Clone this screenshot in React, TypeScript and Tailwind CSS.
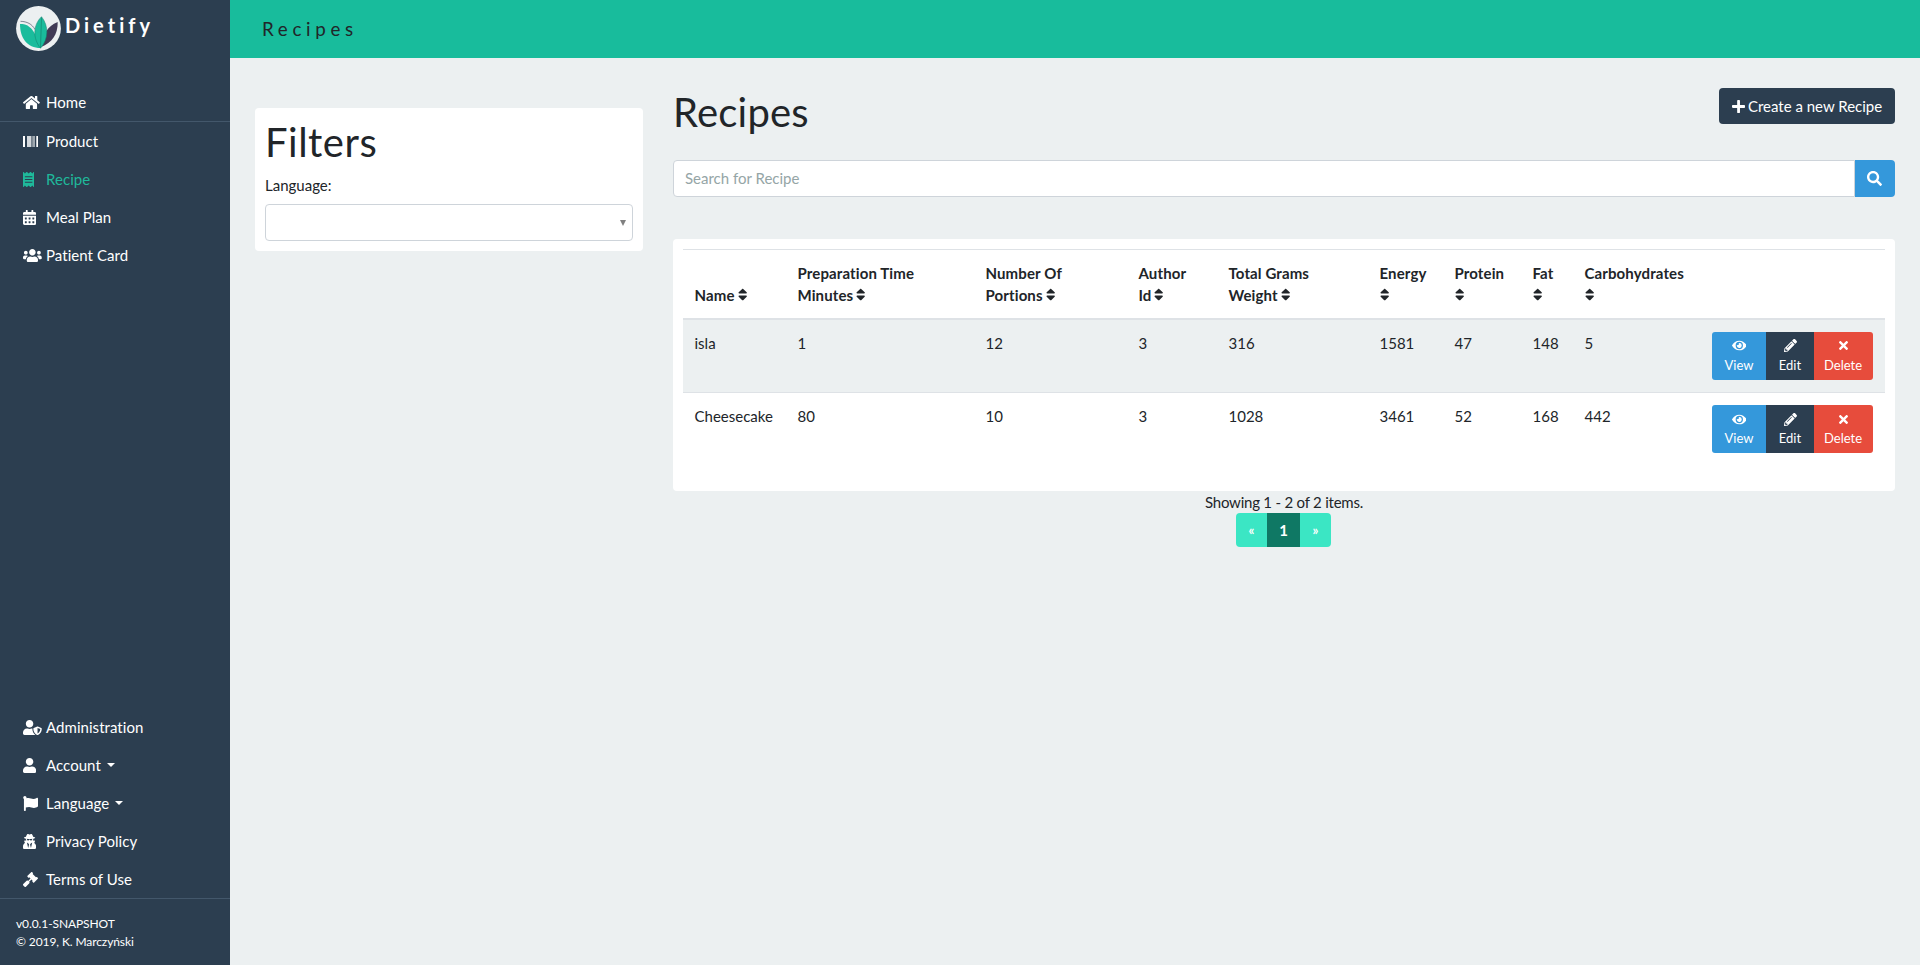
import React from "react";
import {
  FaHome, FaReceipt, FaCalendarAlt, FaUsers, FaUserShield, FaUser, FaFlag,
  FaUserSecret, FaGavel, FaPlus, FaSearch, FaSort, FaEye, FaPencilAlt, FaTimes,
} from "react-icons/fa";

type IconComponent = React.ComponentType<{ className?: string }>;
type NavEntry = { icon: IconComponent; size: string; label: string; active?: boolean; caret?: boolean };

function Barcode({ className }: { className?: string }) {
  return (
    <svg viewBox="0 0 15 15" className={className} fill="currentColor">
      <rect x="0" y="2" width="2" height="11" />
      <rect x="4" y="2" width="4" height="11" opacity="0.8" />
      <rect x="8" y="2" width="1.500" height="11" opacity="0.35" />
      <rect x="9.500" y="2" width="2.500" height="11" opacity="0.55" />
      <rect x="13.300" y="2" width="1.700" height="11" />
    </svg>
  );
}

const mainNav: NavEntry[] = [
  { icon: Barcode, size: "w-[15px]", label: "Product" },
  { icon: FaReceipt, size: "w-[11.25px]", label: "Recipe", active: true },
  { icon: FaCalendarAlt, size: "w-[13.125px]", label: "Meal Plan" },
  { icon: FaUsers, size: "w-[18.75px]", label: "Patient Card" },
];

const bottomNav: NavEntry[] = [
  { icon: FaUserShield, size: "w-[18.75px]", label: "Administration" },
  { icon: FaUser, size: "w-[13.125px]", label: "Account", caret: true },
  { icon: FaFlag, size: "w-[15px]", label: "Language", caret: true },
  { icon: FaUserSecret, size: "w-[13.125px]", label: "Privacy Policy" },
  { icon: FaGavel, size: "w-[15px]", label: "Terms of Use" },
];

const columns: { lines: string[]; width: string }[] = [
  { lines: ["Name"], width: "w-[103px]" },
  { lines: ["Preparation Time", "Minutes"], width: "w-[188px]" },
  { lines: ["Number Of", "Portions"], width: "w-[153px]" },
  { lines: ["Author", "Id"], width: "w-[90px]" },
  { lines: ["Total Grams", "Weight"], width: "w-[151px]" },
  { lines: ["Energy", ""], width: "w-[75px]" },
  { lines: ["Protein", ""], width: "w-[78px]" },
  { lines: ["Fat", ""], width: "w-[52px]" },
  { lines: ["Carbohydrates", ""], width: "w-[127px]" },
];

const rows: string[][] = [
  ["isla", "1", "12", "3", "316", "1581", "47", "148", "5"],
  ["Cheesecake", "80", "10", "3", "1028", "3461", "52", "168", "442"],
];

function Logo() {
  return (
    <svg viewBox="0 0 45 45" className="h-[45px] w-[45px]">
      <circle cx="22.500" cy="22.500" r="22.400" fill="#ecf0f1" />
      <path d="M25 41 C27 29 31 20 41.700 16 C42 28 36 37 25 41Z" fill="#413b56" />
      <path d="M19 23.500 C16 18 11 15.500 4.500 15.300" fill="none" stroke="#55566a" strokeWidth="0.7" />
      <path d="M4 18 C11 17.500 18.500 21 24.500 42 C11 42 4 32 4 18Z" fill="#1abc9c" />
      <path d="M25.500 10.700 C17 19 16.500 32 24.500 42.300 C32.500 33 33 20 25.500 10.700Z" fill="#1abc9c" stroke="#137e6d" strokeWidth="0.5" />
      <path d="M25.500 11.500 L24.500 42" stroke="#13846f" strokeWidth="0.7" />
    </svg>
  );
}

function NavItem({ icon: Icon, size, label, active, caret }: NavEntry) {
  return (
    <li className={`flex h-[38px] items-center pl-[23px] ${active ? "text-[#1fb99b]" : "text-white"}`}>
      <span className="flex w-[23px] shrink-0">
        <Icon className={`h-[15px] ${size}`} />
      </span>
      <span className="tracking-[0.05px]">{label}</span>
      {caret && (
        <span className="ml-[6px] border-x-[4.5px] border-t-[4.5px] border-x-transparent border-t-white" />
      )}
    </li>
  );
}

function RowActions() {
  const base = "flex h-12 flex-col items-center pt-1 text-[13px] leading-[19.5px] text-white";
  return (
    <div className="flex w-[161px] overflow-hidden rounded-[3px]">
      <button className={`${base} w-[54px] bg-[#3498db]`}>
        <span className="flex h-5 items-center"><FaEye className="h-[13px] w-[14.6px]" /></span>View
      </button>
      <button className={`${base} w-12 bg-[#2c3e50]`}>
        <span className="flex h-5 items-center"><FaPencilAlt className="h-[13px] w-[13px]" /></span>Edit
      </button>
      <button className={`${base} w-[59px] bg-[#e74c3c] pr-px`}>
        <span className="flex h-5 items-center"><FaTimes className="h-[13px] w-[9px]" /></span>Delete
      </button>
    </div>
  );
}

function Sidebar() {
  return (
    <aside className="flex w-[230px] shrink-0 flex-col bg-[#2c3e50]">
      <div className="flex h-[83px] pl-4 pt-[6px]">
        <Logo />
        <span className="ml-[4px] mt-[4px] text-[20px] font-bold leading-[31px] tracking-[4px] text-white">Dietify</span>
      </div>
      <ul className="border-b border-[#43576b]">
        <NavItem icon={FaHome} size="w-[16.875px]" label="Home" />
      </ul>
      <ul>
        {mainNav.map((n) => <NavItem key={n.label} {...n} />)}
      </ul>
      <ul className="mt-auto border-b border-[#43576b]">
        {bottomNav.map((n) => <NavItem key={n.label} {...n} />)}
      </ul>
      <div className="h-[66px] pl-4 pt-4 text-xs leading-[18px] tracking-[-0.1px] text-white">
        <p>v0.0.1-SNAPSHOT</p>
        <p>© 2019, K. Marczyński</p>
      </div>
    </aside>
  );
}

export default function App() {
  return (
    <div className="flex h-[965px] w-[1920px] overflow-hidden bg-[#ecf0f1] font-['Lato','Noto_Sans',sans-serif] text-[15px] leading-[22px] text-[#212529] [font-variant-ligatures:none]">
      <Sidebar />
      <div className="flex grow flex-col">
        <header className="flex h-[58px] items-center bg-[#18bc9c] pl-8 text-[18.75px] tracking-[4.7px]">Recipes</header>
        <main className="flex pl-[25px] pr-[25px]">
          <section className="mt-[50px] h-[143px] w-[388px] rounded bg-white px-[10px] pt-[10px]">
            <h2 className="text-[40px] leading-[48px] tracking-[0.5px]">Filters</h2>
            <label className="mt-2 block">Language:</label>
            <div className="mt-2 flex h-[37px] items-center justify-end rounded border border-[#ced4da] bg-white pr-[6px]">
              <svg viewBox="0 0 6 6" className="h-[6px] w-[6px]"><path d="M0 0H6L3 6Z" fill="#808080" /></svg>
            </div>
          </section>
          <section className="ml-[30px] w-[1222px] pt-[30px]">
            <div className="flex h-[72px] items-start justify-between">
              <h1 className="text-[40px] leading-[48px] tracking-[0.2px]">Recipes</h1>
              <button className="flex h-9 w-44 items-center justify-center gap-[3px] whitespace-nowrap rounded bg-[#2c3e50] text-white">
                <FaPlus className="h-[15px] w-[13.125px]" />
                <span>Create a new Recipe</span>
              </button>
            </div>
            <div className="flex h-[37px]">
              <div className="flex grow items-center rounded-l border border-[#ced4da] bg-white pb-[2px] pl-[11px] text-[#95a5a6]">Search for Recipe</div>
              <button className="flex w-10 items-center justify-center rounded-r bg-[#3498db] pr-[2px] text-white">
                <FaSearch className="h-[15px] w-[15px]" />
              </button>
            </div>
            <div className="mt-[42px] h-[252px] rounded bg-white p-[10px]">
              <table className="w-[1202px] table-fixed border-collapse text-left">
                <thead>
                  <tr className="h-[69px] border-b-2 border-t border-[#dee2e6] border-b-[#dee2e6]">
                    {columns.map((c) => (
                      <th key={c.lines[0]} className={`${c.width} whitespace-nowrap pl-[11.5px] pb-3 align-bottom font-bold tracking-[0.12px]`}>
                        {c.lines.map((line, i) => (
                          <div key={i} className="flex h-[22px] items-center gap-[3px]">
                            {line && <span>{line}</span>}
                            {i === c.lines.length - 1 && <FaSort className="h-[15px] w-[9.375px]" />}
                          </div>
                        ))}
                      </th>
                    ))}
                    <th className="w-[185px]" />
                  </tr>
                </thead>
                <tbody>
                  {rows.map((r, i) => (
                    <tr key={r[0]} className={i === 0 ? "h-[74px] border-b border-[#dee2e6] bg-[#ecf0f1]" : "h-[73px]"}>
                      {r.map((v, j) => (
                        <td key={j} className="pl-[11.5px] pt-3 align-top">{v}</td>
                      ))}
                      <td className="pl-3 pt-3 align-top"><RowActions /></td>
                    </tr>
                  ))}
                </tbody>
              </table>
            </div>
            <p className="flex h-[22px] items-center justify-center tracking-[-0.22px]">Showing 1 - 2 of 2 items.</p>
            <div className="flex justify-center pr-px">
              <div className="flex h-[34px] items-center overflow-hidden rounded bg-[#3be6c4] text-center font-bold leading-[34px] text-white">
                <span className="w-[31px] text-[13px]">«</span>
                <span className="w-[33px] bg-[#0f7864]">1</span>
                <span className="w-[31px] text-[13px]">»</span>
              </div>
            </div>
          </section>
        </main>
      </div>
    </div>
  );
}
